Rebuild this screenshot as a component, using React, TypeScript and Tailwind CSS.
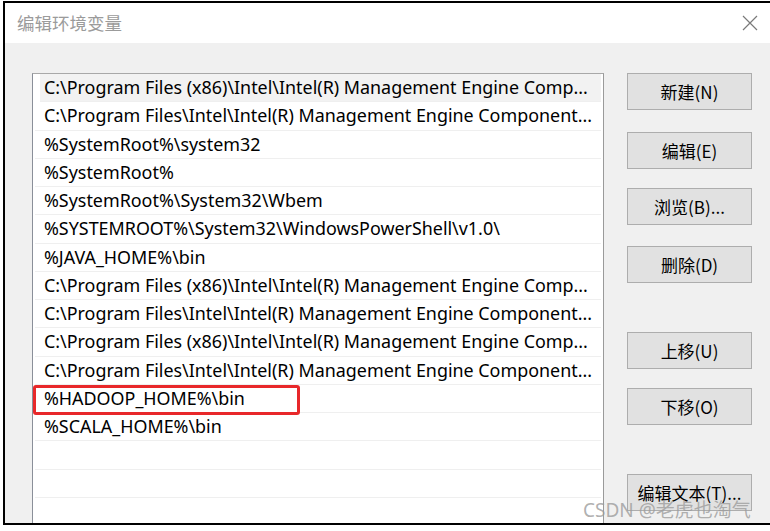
import React from "react";

const paths = [
  "C:\\Program Files (x86)\\Intel\\Intel(R) Management Engine Comp...",
  "C:\\Program Files\\Intel\\Intel(R) Management Engine Component...",
  "%SystemRoot%\\system32",
  "%SystemRoot%",
  "%SystemRoot%\\System32\\Wbem",
  "%SYSTEMROOT%\\System32\\WindowsPowerShell\\v1.0\\",
  "%JAVA_HOME%\\bin",
  "C:\\Program Files (x86)\\Intel\\Intel(R) Management Engine Comp...",
  "C:\\Program Files\\Intel\\Intel(R) Management Engine Component...",
  "C:\\Program Files (x86)\\Intel\\Intel(R) Management Engine Comp...",
  "C:\\Program Files\\Intel\\Intel(R) Management Engine Component...",
  "%HADOOP_HOME%\\bin",
  "%SCALA_HOME%\\bin",
  "",
  "",
  "",
];

const buttons = [
  { label: "新建(N)", gap: "mt-0" },
  { label: "编辑(E)", gap: "mt-[22px]" },
  { label: "浏览(B)...", gap: "mt-[19px]" },
  { label: "删除(D)", gap: "mt-[21px]" },
  { label: "上移(U)", gap: "mt-[49px]" },
  { label: "下移(O)", gap: "mt-[19px]" },
  { label: "编辑文本(T)...", gap: "mt-[49px]" },
];

const font = "font-['Noto_Sans','Noto_Sans_CJK_SC',sans-serif]";

export default function App() {
  return (
    <div className={`relative h-[531px] w-[770px] overflow-hidden bg-white ${font}`}>
      <div className="ml-[3px] mt-[1px] flex h-[524px] w-[767px] flex-col border-b-2 border-l-2 border-t-2 border-black">
        {/* title bar */}
        <div className="flex h-[40px] shrink-0 items-center justify-between bg-white pl-[12px] pr-[12px]">
          <span className="font-['Noto_Sans_CJK_SC',sans-serif] text-[17.5px] text-[#9b9b9b]">
            编辑环境变量
          </span>
          <svg width="16" height="16" viewBox="0 0 16 16" className="text-[#7a7a7a]">
            <path d="M1 1 L15 15 M15 1 L1 15" stroke="currentColor" strokeWidth="1.2" fill="none" />
          </svg>
        </div>

        {/* body */}
        <div className="flex min-h-0 flex-1 bg-[#f0f0f0] pl-[27px] pt-[30px]">
          <div className="relative w-[572px] overflow-hidden border-l border-r border-t border-l-[#8a8f99] border-r-[#9a9a9a] border-t-[#a8a8a8] bg-white">
            {paths.map((p, i) => (
              <div key={i} className="relative h-[28.25px] px-[2px]">
                <div
                  className={`flex h-full items-center overflow-hidden whitespace-nowrap border-b border-[#efefef] text-[17.9px] text-black ${
                    i === 0 ? "ml-[5px] bg-[#f2f2f2] pl-[4px]" : "pl-[9px]"
                  }`}
                >
                  {p}
                </div>
                {p === "%HADOOP_HOME%\\bin" && (
                  <div className="absolute left-0 top-0 h-[30px] w-[267px] rounded-[3px] border-[3px] border-[#e8282a]" />
                )}
              </div>
            ))}
          </div>

          <div className="ml-[23px] flex flex-col">
            {buttons.map((b) => (
              <button
                key={b.label}
                type="button"
                className={`${b.gap} flex h-[37px] w-[125px] items-center justify-center border border-[#adadad] bg-[#e1e1e1] font-['Noto_Sans_CJK_SC',sans-serif] text-[17px] text-black`}
              >
                {b.label}
              </button>
            ))}
          </div>
        </div>
      </div>

      <div className="absolute left-[583px] top-[496px] font-['Noto_Sans','Noto_Sans_CJK_SC',sans-serif] text-[19px] text-[#9c9c9c]/80">
        CSDN @老虎也淘气
      </div>
    </div>
  );
}
